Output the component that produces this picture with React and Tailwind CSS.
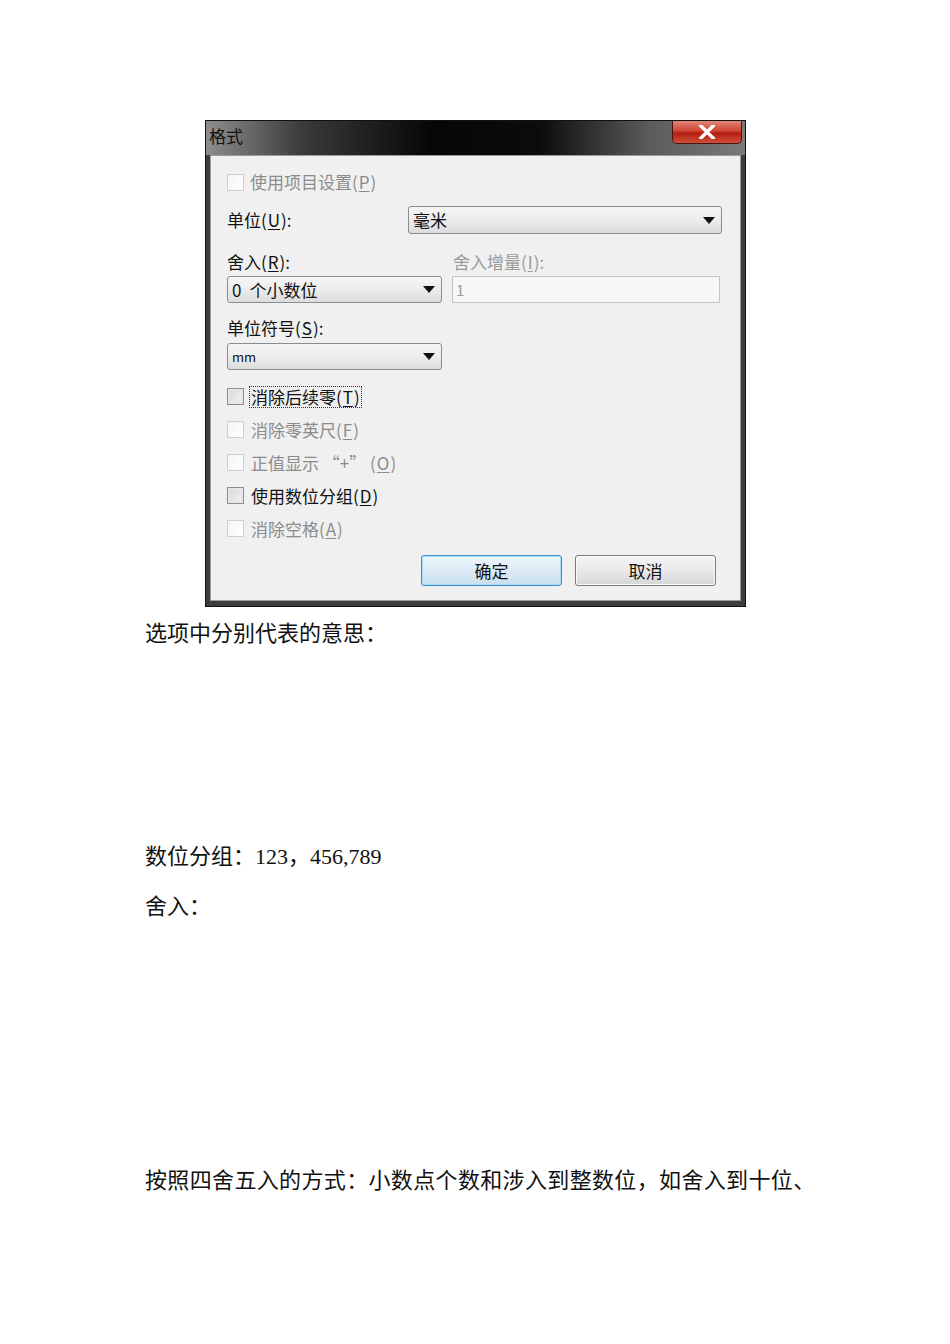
import React from 'react';

const ui = { fontFamily: '"Noto Sans CJK SC", "Noto Sans", sans-serif' };
const doc = { fontFamily: '"Liberation Serif", "Noto Sans CJK SC", serif' };

const Mn = ({ children }) => <span className="underline underline-offset-2 px-[1px]">{children}</span>;

const Check = ({ disabled }) => (
  <span
    className={
      'inline-block w-[17px] h-[17px] shrink-0 border ' +
      (disabled
        ? 'border-[#cfcfcf] bg-[linear-gradient(135deg,#f4f4f4,#ffffff)]'
        : 'border-[#8e8e8e] bg-[linear-gradient(135deg,#d4d4d4,#f6f6f6)] shadow-[inset_0_0_0_2px_#e6e6e6]')
    }
  />
);

const Arrow = () => (
  <svg width="12" height="7" viewBox="0 0 12 7" className="shrink-0">
    <path d="M0 0 L12 0 L6 7 Z" fill="#111" />
  </svg>
);

const Select = ({ className, children, small }) => (
  <div
    className={
      'flex items-center justify-between pl-[4px] pr-[6px] border border-[#8c8c8c] rounded-[3px] bg-[linear-gradient(180deg,#f6f6f6_0%,#ececec_50%,#dcdcdc_100%)] ' +
      className
    }
  >
    <span className={small ? 'text-[13px] text-[#111]' : 'text-[17px] text-[#111]'}>{children}</span>
    <Arrow />
  </div>
);

const CheckRow = ({ disabled, focused, children }) => (
  <div className="h-[33px] flex items-center gap-[5px]">
    <Check disabled={disabled} />
    <span
      className={
        'text-[17px] leading-[20px] px-[1px] ' +
        (disabled ? 'text-[#8c8c8c]' : 'text-[#111]') +
        (focused ? ' border border-dotted border-[#333]' : ' border border-transparent')
      }
    >
      {children}
    </span>
  </div>
);

const Dialog = () => (
  <div className="w-[541px] h-[487px] ml-[205px] bg-[#3d3d3d] border border-[#111] flex flex-col" style={ui}>
    <div className="h-[34px] shrink-0 flex justify-between items-start bg-[linear-gradient(90deg,#8e8e8e_0%,#3a3a3a_18%,#060606_42%,#0c0c0c_62%,#5a5a5a_82%,#7a7a7a_100%)]">
      <span className="text-[17px] leading-[30px] pl-[3px] text-[#111]">格式</span>
      <div className="w-[70px] h-[23px] mr-[3px] rounded-b-[5px] border border-t-0 border-[#4a120c] bg-[linear-gradient(180deg,#e2887a_0%,#cc4434_45%,#b41d10_55%,#d0503a_100%)] flex items-center justify-center">
        <svg width="18" height="14" viewBox="0 0 18 14">
          <path d="M3 1 L15 13 M15 1 L3 13" stroke="#fff" strokeWidth="3.4" strokeLinecap="square" />
        </svg>
      </div>
    </div>
    <div className="flex-1 mx-[4px] mb-[5px] bg-[#f0f0f0] border border-[#9a9a9a] pl-[16px] pr-[18px] flex flex-col">
      <div className="mt-[17px] h-[18px] flex items-center gap-[6px]">
        <Check disabled />
        <span className="text-[17px] text-[#8c8c8c]">使用项目设置(<Mn>P</Mn>)</span>
      </div>
      <div className="mt-[15px] flex items-center justify-between">
        <span className="text-[17px] text-[#111]">单位(<Mn>U</Mn>):</span>
        <Select className="w-[314px] h-[28px]">毫米</Select>
      </div>
      <div className="mt-[17px] flex">
        <span className="w-[226px] text-[17px] leading-[22px] text-[#111]">舍入(<Mn>R</Mn>):</span>
        <span className="text-[17px] leading-[22px] text-[#9a9a9a]">舍入增量(<Mn>I</Mn>):</span>
      </div>
      <div className="mt-[3px] flex gap-[10px]">
        <Select className="w-[215px] h-[27px]">
          0<span className="ml-[8px]">个小数位</span>
        </Select>
        <div className="w-[268px] h-[27px] border border-[#c4c4c4] bg-[#f7f7f7] pl-[3px] text-[15px] leading-[25px] text-[#9a9a9a]">
          1
        </div>
      </div>
      <div className="mt-[14px] text-[17px] leading-[22px] text-[#111]">
        单位符号(<Mn>S</Mn>):
      </div>
      <Select className="mt-[4px] w-[215px] h-[27px]" small>
        mm
      </Select>
      <div className="mt-[10px] flex flex-col">
        <CheckRow focused>
          消除后续零(<Mn>T</Mn>)
        </CheckRow>
        <CheckRow disabled>
          消除零英尺(<Mn>F</Mn>)
        </CheckRow>
        <CheckRow disabled>
          正值显示 “+” (<Mn>O</Mn>)
        </CheckRow>
        <CheckRow>
          使用数位分组(<Mn>D</Mn>)
        </CheckRow>
        <CheckRow disabled>
          消除空格(<Mn>A</Mn>)
        </CheckRow>
      </div>
      <div className="mt-[10px] flex gap-[13px] pl-[194px]">
        <button className="w-[141px] h-[31px] rounded-[3px] border border-[#3c8fd0] shadow-[inset_0_0_0_1px_#a8dbf7] bg-[linear-gradient(180deg,#eef6fb_0%,#dcebf5_50%,#c6dfee_100%)] text-[17px] text-[#111]">
          确定
        </button>
        <button className="w-[141px] h-[31px] rounded-[3px] border border-[#7a7a7a] shadow-[inset_0_0_0_1px_#fbfbfb] bg-[linear-gradient(180deg,#f4f4f4_0%,#e9e9e9_50%,#d6d6d6_100%)] text-[17px] text-[#111]">
          取消
        </button>
      </div>
    </div>
  </div>
);

export default function App() {
  return (
    <div className="w-[950px] h-[1344px] bg-white pt-[120px] overflow-hidden">
      <Dialog />
      <div className="pl-[145px] text-[22px] leading-[28px] text-[#111]" style={doc}>
        <p className="mt-[13px]">选项中分别代表的意思：</p>
        <p className="mt-[195px]">数位分组：123，456,789</p>
        <p className="mt-[22px]">舍入：</p>
        <p className="mt-[246px] tracking-[0.35px]">按照四舍五入的方式：小数点个数和涉入到整数位，如舍入到十位、</p>
      </div>
    </div>
  );
}
